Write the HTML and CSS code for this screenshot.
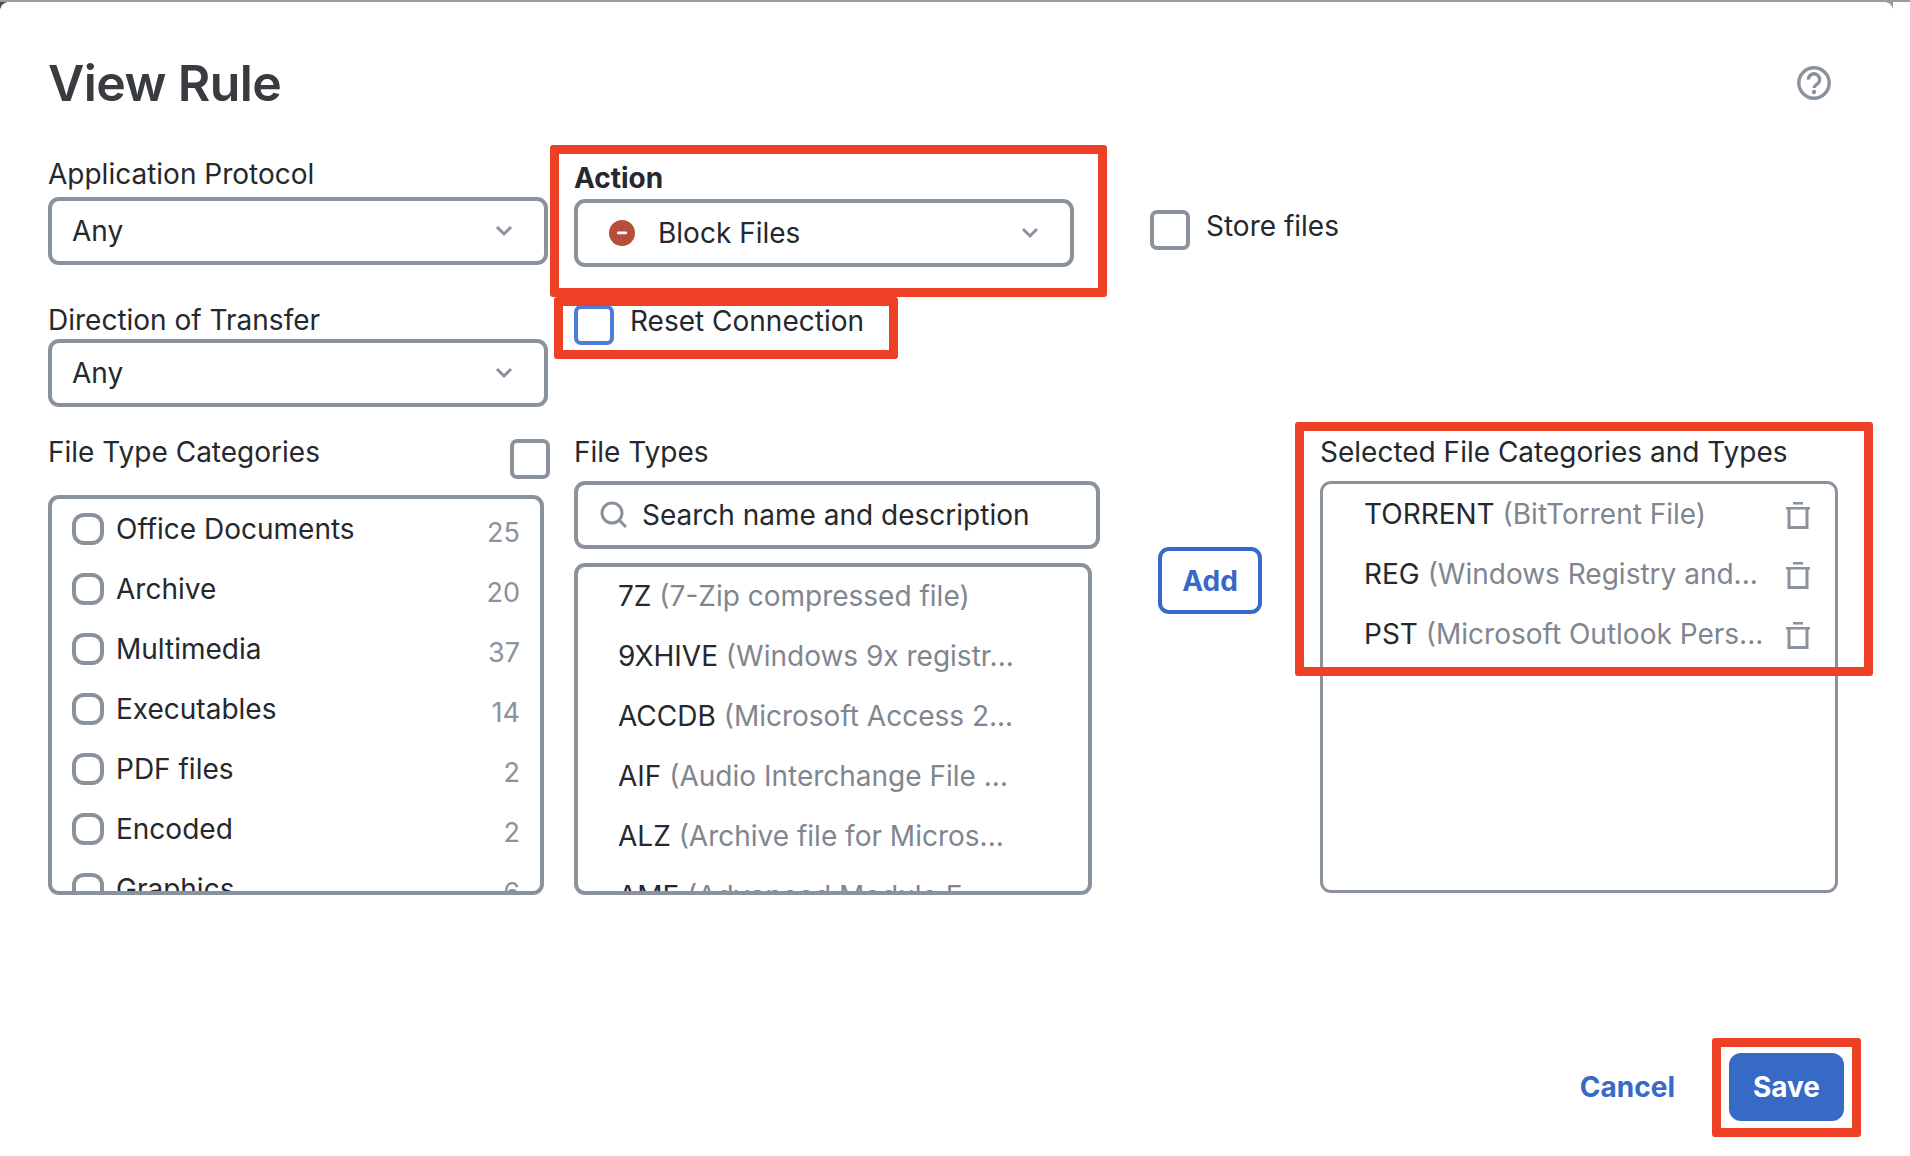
FILE: index.html
```html
<!DOCTYPE html>
<html lang="en">
<head>
<meta charset="utf-8">
<title>View Rule</title>
<link rel="stylesheet" href="styles.css">
</head>
<body>
<div class="modal">
  <span class="corner corner-left"></span>
  <span class="corner corner-right"></span>
  <header class="modal-head">
    <h1 class="title">View Rule</h1>
    <svg class="help" viewBox="0 0 34 34" aria-hidden="true"><circle cx="17" cy="17" r="15.2" fill="none" stroke="currentColor" stroke-width="3.4"/><path d="M11.4 13.6a5.6 5.6 0 1 1 8.9 4.4c-2 1.4-3.3 2.2-3.3 4" fill="none" stroke="currentColor" stroke-width="3.4"/><circle cx="17" cy="26" r="2.2" fill="currentColor"/></svg>
  </header>

  <section class="top-row">
    <div class="col-protocol">
      <label class="label label-first">Application Protocol</label>
      <div class="select"><span class="select-value">Any</span><svg class="chevron" viewBox="0 0 18 12" aria-hidden="true"><path d="M2 2l7 7 7-7" fill="none" stroke="currentColor" stroke-width="3"/></svg></div>
      <label class="label label-second">Direction of Transfer</label>
      <div class="select"><span class="select-value">Any</span><svg class="chevron" viewBox="0 0 18 12" aria-hidden="true"><path d="M2 2l7 7 7-7" fill="none" stroke="currentColor" stroke-width="3"/></svg></div>
    </div>
    <div class="col-action">
      <label class="label label-bold">Action</label>
      <div class="select select-action"><svg class="block-icon" viewBox="0 0 26 26" aria-hidden="true"><circle cx="13" cy="13" r="13" fill="#b54e3a"/><rect x="8" y="11.6" width="10" height="2.6" rx="1" fill="#fff"/></svg><span class="select-value">Block Files</span><svg class="chevron" viewBox="0 0 18 12" aria-hidden="true"><path d="M2 2l7 7 7-7" fill="none" stroke="currentColor" stroke-width="3"/></svg></div>
      <div class="check-row check-reset"><span class="box box-focus"></span><span class="check-text">Reset Connection</span></div>
    </div>
    <div class="check-row check-store"><span class="box"></span><span class="check-text">Store files</span></div>
  </section>

  <section class="bottom-row">
    <div class="col-categories">
      <div class="cat-head"><label class="label">File Type Categories</label><span class="box box-all"></span></div>
      <ul class="list list-cat">
        <li class="cat"><span class="radio"></span><span class="cat-name">Office Documents</span><span class="count">25</span></li>
        <li class="cat"><span class="radio"></span><span class="cat-name">Archive</span><span class="count">20</span></li>
        <li class="cat"><span class="radio"></span><span class="cat-name">Multimedia</span><span class="count">37</span></li>
        <li class="cat"><span class="radio"></span><span class="cat-name">Executables</span><span class="count">14</span></li>
        <li class="cat"><span class="radio"></span><span class="cat-name">PDF files</span><span class="count">2</span></li>
        <li class="cat"><span class="radio"></span><span class="cat-name">Encoded</span><span class="count">2</span></li>
        <li class="cat"><span class="radio"></span><span class="cat-name">Graphics</span><span class="count">6</span></li>
      </ul>
    </div>
    <div class="col-types">
      <label class="label label-gap">File Types</label>
      <div class="search"><svg class="search-icon" viewBox="0 0 28 28" aria-hidden="true"><circle cx="12" cy="12" r="10" fill="none" stroke="currentColor" stroke-width="3"/><path d="M19 19l7 7" fill="none" stroke="currentColor" stroke-width="3"/></svg><span>Search name and description</span></div>
      <ul class="list list-types">
        <li class="type">7Z <span class="muted">(7-Zip compressed file)</span></li>
        <li class="type">9XHIVE <span class="muted">(Windows 9x registr...</span></li>
        <li class="type">ACCDB <span class="muted">(Microsoft Access 2...</span></li>
        <li class="type">AIF <span class="muted">(Audio Interchange File ...</span></li>
        <li class="type">ALZ <span class="muted">(Archive file for Micros...</span></li>
        <li class="type">AMF <span class="muted">(Advanced Module F...</span></li>
      </ul>
    </div>
    <button class="btn-add" type="button">Add</button>
    <div class="col-selected">
      <label class="label label-gap">Selected File Categories and Types</label>
      <ul class="list list-selected">
        <li class="sel"><span class="sel-text">TORRENT <span class="muted">(BitTorrent File)</span></span><svg class="trash" viewBox="0 0 24 27" aria-hidden="true"><path d="M7 1.2h10M0 6.2h24" stroke="currentColor" stroke-width="2.6" fill="none"/><path d="M3 6.2v19.3h18V6.2" stroke="currentColor" stroke-width="3" fill="none"/></svg></li>
        <li class="sel"><span class="sel-text">REG <span class="muted">(Windows Registry and...</span></span><svg class="trash" viewBox="0 0 24 27" aria-hidden="true"><path d="M7 1.2h10M0 6.2h24" stroke="currentColor" stroke-width="2.6" fill="none"/><path d="M3 6.2v19.3h18V6.2" stroke="currentColor" stroke-width="3" fill="none"/></svg></li>
        <li class="sel"><span class="sel-text">PST <span class="muted">(Microsoft Outlook Pers...</span></span><svg class="trash" viewBox="0 0 24 27" aria-hidden="true"><path d="M7 1.2h10M0 6.2h24" stroke="currentColor" stroke-width="2.6" fill="none"/><path d="M3 6.2v19.3h18V6.2" stroke="currentColor" stroke-width="3" fill="none"/></svg></li>
      </ul>
    </div>
  </section>

  <footer class="modal-foot">
    <button class="btn-cancel" type="button">Cancel</button>
    <button class="btn-save" type="button">Save</button>
  </footer>

  <span class="mark mark-action"></span>
  <span class="mark mark-reset"></span>
  <span class="mark mark-selected"></span>
  <span class="mark mark-save"></span>
</div>
</body>
</html>
```
FILE: styles.css
```css
* { box-sizing: border-box; }
html, body { margin: 0; padding: 0; background: #fff; }
body { font-family: Inter, "Liberation Sans", sans-serif; color: #25282d; font-size: 28px; line-height: 34px; }

.modal { position: relative; width: 1910px; height: 1156px; padding: 0 0 0 48px; background: #fff; border-top: 2px solid #9c9c9c; overflow: hidden; }

.corner { position: absolute; top: 0; width: 8px; height: 8px; }
.corner-left { left: 0; background: radial-gradient(circle at 100% 100%, transparent 7.5px, #4a4a4a 8px); }
.corner-right { left: 1885px; background: radial-gradient(circle at 0 100%, transparent 7.5px, #9c9c9c 8px); }

.modal-head { display: flex; justify-content: space-between; align-items: flex-start; height: 155px; padding: 53px 79px 0 0; }
.title { margin: 0; font-size: 50px; line-height: 56px; font-weight: 600; color: #383b40; letter-spacing: -0.6px; }
.help { width: 34px; height: 34px; margin-top: 11px; color: #8a929c; }

.top-row { display: flex; align-items: flex-start; height: 250px; }
.col-protocol { width: 500px; margin-right: 26px; }
.col-action { width: 500px; margin-right: 76px; padding-top: 4px; }

.label { display: block; }
.label-first { margin-bottom: 6px; }
.label-second { margin: 38px 0 2px; }
.label-bold { font-weight: 700; margin-bottom: 4px; }
.label-gap { margin-bottom: 12px; }

.select { display: flex; align-items: center; height: 68px; padding: 0 31px 0 20px; border: 4px solid #8a929c; border-radius: 11px; }
.select-value { flex: 1; }
.chevron { width: 18px; height: 12px; color: #8a929c; }
.select-action { padding-left: 31px; }
.block-icon { width: 26px; height: 26px; margin-right: 23px; }

.check-row { display: flex; align-items: flex-start; }
.check-reset { margin-top: 37px; gap: 16px; }
.check-store { margin-top: 52px; gap: 16px; }
.check-text { display: block; }
.box { display: block; width: 40px; height: 40px; margin-top: 1px; border: 4px solid #8a929c; border-radius: 7px; }
.box-focus { border-color: #4f7cd9; }
.box-all { margin-top: 4px; }

.bottom-row { display: flex; align-items: flex-start; margin-top: 28px; }
.col-categories { width: 502px; margin-right: 24px; }
.cat-head { display: flex; justify-content: space-between; align-items: flex-start; height: 60px; }

.list { margin: 0; padding: 0; list-style: none; border: 4px solid #8a929c; border-radius: 11px; overflow: hidden; }
.list-cat { width: 496px; height: 400px; }
.cat { display: flex; align-items: center; height: 60px; padding: 0 20px 0 20px; }
.radio { flex: none; width: 32px; height: 32px; margin-right: 12px; border: 4px solid #8a929c; border-radius: 12px; }
.cat-name { flex: 1; }
.count { margin-top: 8px; font-size: 27px; color: #8a929c; }

.col-types { width: 526px; }
.search { display: flex; align-items: center; height: 68px; padding: 0 0 0 22px; border: 4px solid #8a929c; border-radius: 11px; }
.search-icon { width: 28px; height: 28px; margin-right: 14px; color: #8a929c; }
.list-types { width: 518px; height: 332px; margin-top: 14px; }
.type { height: 60px; padding: 12px 0 0 40px; white-space: nowrap; }
.muted { color: #7f868f; }

.btn-add { width: 104px; height: 67px; margin: 112px 58px 0 58px; padding: 0; background: #fff; border: 4px solid #3869c6; border-radius: 11px; color: #3869c6; font: 700 28px/34px Inter, "Liberation Sans", sans-serif; }

.col-selected { width: 518px; }
.list-selected { height: 412px; padding-top: 0; border-width: 3px; }
.sel { display: flex; align-items: center; justify-content: space-between; height: 60px; padding: 0 25px 0 41px; white-space: nowrap; }
.trash { width: 24px; height: 27px; margin-top: 2px; color: #8a929c; }

.modal-foot { display: flex; justify-content: flex-end; align-items: center; gap: 54px; margin-top: 158px; padding-right: 66px; }
.btn-cancel { padding: 0 0 1px; background: none; border: 0; color: #3869c6; font: 700 28px/34px Inter, "Liberation Sans", sans-serif; }
.btn-save { width: 115px; height: 68px; padding: 0 0 1px; background: #366ac4; border: 0; border-radius: 12px; color: #fff; font: 700 28px/34px Inter, "Liberation Sans", sans-serif; }

.mark { position: absolute; border: 9px solid #ee4026; border-radius: 3px; }
.mark-action { left: 550px; top: 143px; width: 557px; height: 152px; }
.mark-reset { left: 554px; top: 295px; width: 344px; height: 62px; }
.mark-selected { left: 1295px; top: 420px; width: 578px; height: 254px; }
.mark-save { left: 1712px; top: 1036px; width: 149px; height: 99px; }
```
